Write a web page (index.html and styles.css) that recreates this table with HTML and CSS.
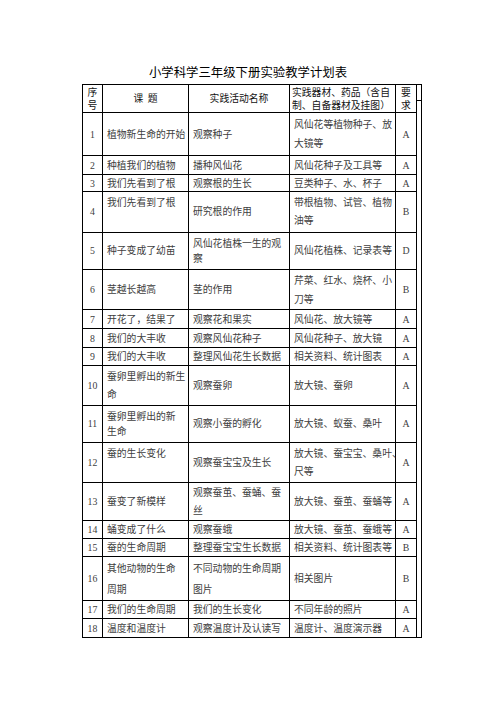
FILE: index.html
```html
<!DOCTYPE html>
<html lang="zh">
<head>
<meta charset="utf-8">
<title>小学科学三年级下册实验教学计划表</title>
<link rel="stylesheet" href="styles.css">
</head>
<body>
<div class="page">
  <h1 class="title">小学科学三年级下册实验教学计划表</h1>
  <table class="plan">
    <colgroup>
      <col class="c1"><col class="c2"><col class="c3"><col class="c4"><col class="c5"><col class="c6">
    </colgroup>
    <thead>
      <tr class="h28">
        <th class="num">序<br>号</th>
        <th class="ctr">课&nbsp;&nbsp;题</th>
        <th class="ctr">实践活动名称</th>
        <th class="left">实践器材、药品（含自<br>制、自备器材及挂图）</th>
        <th class="num">要<br>求</th>
        <th class="x"><div class="xsplit"></div></th>
      </tr>
    </thead>
    <tbody>
      <tr class="h43 two19"><td class="num">1</td><td>植物新生命的开始</td><td>观察种子</td><td>风仙花等植物种子、放<br>大镜等</td><td class="num">A</td><td class="x"></td></tr>
      <tr class="h19"><td class="num">2</td><td>种植我们的植物</td><td>播种风仙花</td><td>风仙花种子及工具等</td><td class="num">A</td><td class="x"></td></tr>
      <tr class="h17"><td class="num">3</td><td>我们先看到了根</td><td>观察根的生长</td><td>豆类种子、水、杯子</td><td class="num">A</td><td class="x"></td></tr>
      <tr class="h41 two"><td class="num">4</td><td>我们先看到了根<br>&nbsp;</td><td>研究根的作用</td><td>带根植物、试管、植物<br>油等</td><td class="num">B</td><td class="x"></td></tr>
      <tr class="h37 two"><td class="num">5</td><td>种子变成了幼苗</td><td class="lh15">风仙花植株一生的观<br>察</td><td>风仙花植株、记录表等</td><td class="num">D</td><td class="x"></td></tr>
      <tr class="h40 two19"><td class="num">6</td><td>茎越长越高</td><td>茎的作用</td><td>芹菜、红水、烧杯、小<br>刀等</td><td class="num">B</td><td class="x"></td></tr>
      <tr class="h19"><td class="num">7</td><td>开花了，结果了</td><td>观察花和果实</td><td>风仙花、放大镜等</td><td class="num">A</td><td class="x"></td></tr>
      <tr class="h19"><td class="num">8</td><td>我们的大丰收</td><td>观察风仙花种子</td><td>风仙花种子、放大镜</td><td class="num">A</td><td class="x"></td></tr>
      <tr class="h18"><td class="num">9</td><td>我们的大丰收</td><td>整理风仙花生长数据</td><td>相关资料、统计图表</td><td class="num">A</td><td class="x"></td></tr>
      <tr class="h40 two"><td class="num">10</td><td>蚕卵里孵出的新生<br>命</td><td>观察蚕卵</td><td>放大镜、蚕卵</td><td class="num">A</td><td class="x"></td></tr>
      <tr class="h37 two"><td class="num">11</td><td class="lh15">蚕卵里孵出的新<br>生命</td><td>观察小蚕的孵化</td><td>放大镜、蚁蚕、桑叶</td><td class="num">A</td><td class="x"></td></tr>
      <tr class="h40 two"><td class="num">12</td><td>蚕的生长变化<br>&nbsp;</td><td>观察蚕宝宝及生长</td><td>放大镜、蚕宝宝、桑叶、<br>尺等</td><td class="num">A</td><td class="x"></td></tr>
      <tr class="h38 two"><td class="num">13</td><td>蚕变了新模样</td><td>观察蚕茧、蚕蛹、蚕<br>丝</td><td>放大镜、蚕茧、蚕蛹等</td><td class="num">A</td><td class="x"></td></tr>
      <tr class="h18"><td class="num">14</td><td>蛹变成了什么</td><td>观察蚕蛾</td><td>放大镜、蚕茧、蚕蛾等</td><td class="num">A</td><td class="x"></td></tr>
      <tr class="h18"><td class="num">15</td><td>蚕的生命周期</td><td>整理蚕宝宝生长数据</td><td>相关资料、统计图表等</td><td class="num">B</td><td class="x"></td></tr>
      <tr class="h44 two"><td class="num">16</td><td class="lh21">其他动物的生命<br>周期</td><td class="lh21">不同动物的生命周期<br>图片</td><td>相关图片</td><td class="num">B</td><td class="x"></td></tr>
      <tr class="h18"><td class="num">17</td><td>我们的生命周期</td><td>我们的生长变化</td><td>不同年龄的照片</td><td class="num">A</td><td class="x"></td></tr>
      <tr class="h19"><td class="num">18</td><td>温度和温度计</td><td>观察温度计及认读写</td><td>温度计、温度演示器</td><td class="num">A</td><td class="x"></td></tr>
    </tbody>
  </table>
</div>
</body>
</html>
```
FILE: styles.css
```css
html, body {
  margin: 0;
  padding: 0;
  background: #ffffff;
}

.page {
  padding-top: 64px;
  font-family: "Noto Sans CJK SC", sans-serif;
}

.title {
  margin: 0 0 4px;
  text-align: center;
  font-size: 12.4px;
  line-height: 16px;
  font-weight: normal;
  color: #000;
}

.plan {
  margin-left: 82px;
  border-collapse: collapse;
  table-layout: fixed;
  width: 340px;
  border: 1px solid #000;
}

.c1 { width: 20px; }
.c2 { width: 86px; }
.c3 { width: 101px; }
.c4 { width: 106px; }
.c5 { width: 21px; }
.c6 { width: 5px; }

.plan th,
.plan td {
  border: 1px solid #000;
  padding: 0 1px 0 4px;
  vertical-align: middle;
  white-space: nowrap;
  overflow: visible;
}

.plan th {
  font-weight: normal;
  font-size: 9.8px;
  line-height: 13px;
  color: #111;
}

.plan td {
  font-family: "Liberation Serif", "Noto Sans CJK SC", serif;
  font-size: 9.8px;
  line-height: 15px;
  color: #404040;
  text-align: left;
}

.plan tr.two td { line-height: 18px; }
.plan tr.two19 td { line-height: 19px; }

.plan th.ctr { text-align: center; padding: 0; }
.plan th.left { text-align: left; padding: 0 0 0 2px; }
.plan .num { text-align: center; padding: 0; }

.plan tr td.lh15 { line-height: 15px; }
.plan tr td.lh21 { line-height: 21px; }

.plan .x {
  padding: 0;
  border-top: none;
  border-bottom: none;
  vertical-align: top;
}

.xsplit {
  height: 15px;
  border-bottom: 1px solid #000;
}

.h17 { height: 17px; }
.h18 { height: 18px; }
.h19 { height: 19px; }
.h28 { height: 28px; }
.h37 { height: 37px; }
.h38 { height: 38px; }
.h40 { height: 40px; }
.h41 { height: 41px; }
.h43 { height: 43px; }
.h44 { height: 44px; }
```
